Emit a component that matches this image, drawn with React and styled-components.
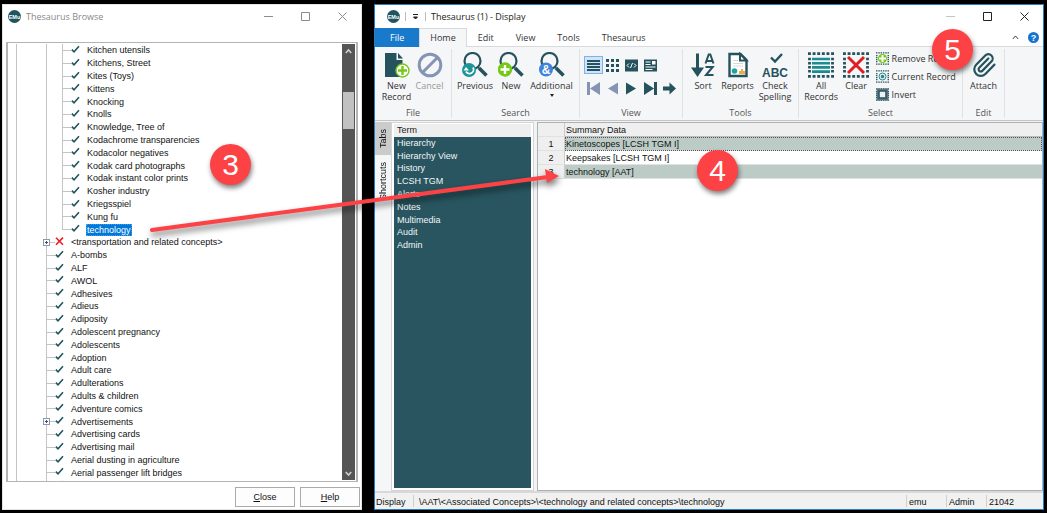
import React from "react";
import styled, { createGlobalStyle, css } from "styled-components";

const C = {
  teal: "#24525d",
  muted: "#8594b4",
  green: "#74c917",
  line: "#d9dadb",
  red: "#fd4245",
};

const Global = createGlobalStyle`
  * { box-sizing: border-box; }
  html, body { margin: 0; background: #000; }
  body { font: 9px/12px "Liberation Sans", Arial, sans-serif; color: #111; }
  button { font: inherit; color: inherit; border: 0; background: none; padding: 0; margin: 0; }
  svg { display: block; flex: none; }
`;

/* ---------- shell ---------- */
const Desktop = styled.div`
  position: relative;
  display: grid;
  grid-template-columns: 36fr 67fr;
  gap: 12px;
  height: 100vh;
  min-height: 400px;
  padding: 4px 3px 3px 2px;
  overflow: hidden;
`;
const Window = styled.section`
  display: flex;
  flex-direction: column;
  min-width: 0;
  min-height: 0;
  background: #fff;
  border: 1px solid ${(p) => (p.$active ? "#2b7cc0" : "#e4e4e4")};
`;
const TitleBar = styled.header`
  display: flex;
  align-items: center;
  flex: none;
  height: 23px;
  padding-left: ${(p) => (p.$inset ? "12px" : "5px")};
  gap: 5px;
  font-family: "Open Sans", "Noto Sans", sans-serif;
  color: ${(p) => (p.$inactive ? "#888" : "#222")};
`;
const Title = styled.h1`
  font: inherit;
  margin: 0;
  flex: 1;
`;
const Caption = styled.button`
  display: grid;
  place-items: center;
  width: 37px;
  height: 22px;
  color: ${(p) => (p.$dim ? "#c4c4c4" : p.$inactive ? "#8b8b8b" : "#222")};
  margin-left: -5px;
  &:nth-last-child(2), &:last-child { margin-left: -5px; }
`;
const Rule = styled.span`
  width: 1px;
  height: 9px;
  background: #bbb;
`;

/* ---------- browse window ---------- */
const TreePanel = styled.div`
  display: flex;
  flex: 1;
  min-height: 0;
  margin: 14px 3px 5px;
  border: 1px solid #b4b4b4;
  border-width: 1px 2px;
`;
const TreeView = styled.div`
  flex: 1;
  min-width: 0;
  padding: 1px 0 0 8px;
  overflow: hidden;
`;
const TreeList = styled.ul`
  display: grid;
  grid-auto-rows: 1fr;
  height: 448px;
  margin: 0;
  padding: 0;
  list-style: none;
`;
const TreeRow = styled.li`
  display: flex;
  align-items: stretch;
  min-height: 0;
  white-space: nowrap;
`;
const Guide = styled.span`
  flex: none;
  width: ${(p) => p.$w}px;
  border-left: 1px solid #c4c4c4;
`;
const Branch = styled.span`
  position: relative;
  flex: none;
  width: 9px;
  border-left: 1px solid ${(p) => (p.$last ? "transparent" : "#c4c4c4")};
  &::before {
    content: "";
    position: absolute;
    left: 0;
    right: 0;
    top: 6px;
    border-top: 1px solid #c4c4c4;
  }
  ${(p) =>
    p.$last &&
    css`
      &::after {
        content: "";
        position: absolute;
        left: -1px;
        top: 0;
        height: 7px;
        border-left: 1px solid #c4c4c4;
      }
    `}
`;
const Expander = styled.button`
  position: absolute;
  z-index: 1;
  left: -4px;
  top: 3px;
  width: 7px;
  height: 7px;
  border: 1px solid #8c98a8;
  background: #fff;
  &::before,
  &::after {
    content: "";
    position: absolute;
    background: #35507c;
  }
  &::before { left: 1px; top: 2px; width: 3px; height: 1px; }
  &::after { left: 2px; top: 1px; width: 1px; height: 3px; }
`;
const Mark = styled.span`
  width: 15px;
  flex: none;
`;
const Label = styled.span`
  align-self: center;
  padding: 0 1px;
  ${(p) =>
    p.$selected &&
    css`
      background: #0078d7;
      color: #fff;
      outline: 1px dotted #3b9cf0;
      outline-offset: -1px;
    `}
`;
const ScrollBar = styled.div`
  display: flex;
  flex-direction: column;
  align-items: stretch;
  width: 13px;
  margin: 1px 1px 1px 0;
  padding: 0 1px;
  background: #555;
  color: #d0d0d0;
`;
const ScrollButton = styled.button`
  display: grid;
  place-items: center;
  height: 14px;
`;
const ScrollTrack = styled.div`
  flex: 1;
  padding-top: 34px;
`;
const ScrollThumb = styled.div`
  height: 37px;
  background: #c1c1c1;
`;
const Footer = styled.footer`
  display: flex;
  justify-content: flex-end;
  gap: 5px;
  padding: 0 1px 2px;
`;
const PushButton = styled.button`
  width: 60px;
  height: 20px;
  border: 1px solid #aaa;
  background: #fdfdfd;
`;

/* ---------- ribbon ---------- */
const TabStrip = styled.nav`
  display: flex;
  flex: none;
  height: 19px;
  border-bottom: 1px solid ${C.line};
  font-family: "Open Sans", "Noto Sans", sans-serif;
`;
const RibbonTab = styled.button`
  height: 19px;
  padding: 0 10px;
  color: #333;
  border: 1px solid transparent;
  border-width: 1px 1px 0;
  ${(p) => p.$kind === "file" && css`background: #1979ca; color: #fff; padding: 0 14px;`}
  ${(p) => p.$kind === "current" && css`background: #f5f6f7; border-color: ${C.line};`}
`;
const TabTools = styled.div`
  display: flex;
  align-items: center;
  gap: 9px;
  margin-left: auto;
  padding-right: 4px;
`;
const Ribbon = styled.div`
  display: flex;
  flex: none;
  height: 74px;
  padding-top: 2px;
  background: #f5f6f7;
  border-bottom: 1px solid #c4c4c4;
  font-family: "Open Sans", "Noto Sans", sans-serif;
  line-height: 11px;
  color: #333;
`;
const Group = styled.section`
  display: flex;
  flex-direction: column;
  flex: none;
  width: ${(p) => p.$w}px;
  margin-bottom: 2px;
  border-right: 1px solid #e0e1e3;
`;
const GroupBody = styled.div`
  display: flex;
  justify-content: center;
  flex: 1;
  padding-top: 3px;
`;
const GroupName = styled.h2`
  font: inherit;
  margin: 0;
  text-align: center;
  color: #555;
`;
const BigButton = styled.button`
  display: flex;
  flex-direction: column;
  align-items: center;
  width: ${(p) => p.$w}px;
  color: ${(p) => (p.disabled ? "#999" : "#333")};
  svg { margin-bottom: 2px; }
`;
const Caret = styled.span`
  margin-top: 3px;
  border: 2px solid transparent;
  border-top: 3px solid #222;
  border-bottom: 0;
`;
const IconGrid = styled.div`
  display: grid;
  grid-template-columns: repeat(5, 19px);
  grid-template-rows: 20px 26px;
  justify-items: center;
  align-items: center;
  padding-top: 3px;
`;
const IconButton = styled.button`
  display: grid;
  place-items: center;
  width: 19px;
  height: 18px;
  ${(p) => p.$on && css`background: #cfe4f9; border: 1px solid #7fb3e8;`}
`;
const SmallList = styled.div`
  display: flex;
  flex-direction: column;
  gap: 5px;
  padding-left: 2px;
`;
const SmallButton = styled.button`
  display: flex;
  align-items: center;
  gap: 3px;
  height: 13px;
  white-space: nowrap;
`;

/* ---------- work area ---------- */
const Work = styled.div`
  display: flex;
  flex: 1;
  min-height: 0;
  padding: 1px 0 0;
  background: #f2f3f4;
`;
const SideTabs = styled.div`
  display: flex;
  flex-direction: column;
  width: 16px;
  flex: none;
  background: #f5f6f8;
`;
const SideTab = styled.button`
  writing-mode: vertical-rl;
  transform: rotate(180deg);
  width: 16px;
  padding: 7px 0;
  text-align: center;
  ${(p) => p.$on && css`background: #cbcbcb;`}
`;
const NavPanel = styled.nav`
  flex: none;
  width: 143px;
  margin-right: 3px;
  padding: 1px 2px 2px;
  background: #fff;
  border: 1px solid #d4d4d4;
`;
const NavFill = styled.div`
  height: 100%;
  background: #28555f;
`;
const NavList = styled.ul`
  display: grid;
  grid-auto-rows: 1fr;
  height: 128px;
  margin: 0;
  padding: 0;
  list-style: none;
`;
const NavItem = styled.li`
  padding-left: 3px;
  background: ${(p) => (p.$on ? "#eee" : "transparent")};
  a { color: ${(p) => (p.$on ? "#222" : "#f2f6f7")}; text-decoration: none; }
`;
const DataPanel = styled.div`
  flex: 1;
  min-width: 0;
  background: #fff;
  border: 1px solid #b0b0b0;
`;
const DataTable = styled.table`
  width: 100%;
  border-collapse: separate;
  border-spacing: 0;
  th, td {
    height: 14px;
    padding: 0 1px;
    line-height: 12px;
    font-weight: normal;
    text-align: left;
    border-bottom: 1px solid #dfe2e1;
  }
  thead th { background: #efefef; border-bottom-color: #bbb; }
  th:first-child, thead td {
    width: 27px;
    text-align: center;
    background: #efefef;
    border-right: 1px solid #ccc;
  }
`;
const Cell = styled.td`
  background: ${(p) => (p.$on ? "#bccbc6" : "#fff")};
  ${(p) => p.$focus && css`outline: 1px dotted #555; outline-offset: -1px;`}
`;
const StatusBar = styled.footer`
  display: flex;
  flex: none;
  height: 18px;
  padding: 2px 0;
  background: #f1f1f1;
  line-height: 14px;
  border-top: 2px solid #d8d8d8;
`;
const StatusPart = styled.span`
  flex: ${(p) => (p.$w ? `0 0 ${p.$w}px` : "1 1 0")};
  white-space: nowrap;
  padding-left: ${(p) => (p.$pad ?? 2)}px;
  border-left: 1px solid ${(p) => (p.$pad === 0 ? "transparent" : "#d0d0d0")};
`;

/* ---------- annotations ---------- */
const Badge = styled.span`
  position: absolute;
  left: ${(p) => p.$x}px;
  top: ${(p) => p.$y}px;
  width: 41px;
  height: 41px;
  border-radius: 50%;
  background: ${C.red};
  color: #fff;
  font-size: 30px;
  line-height: 41px;
  text-align: center;
  box-shadow: 1px 3px 5px rgba(0, 0, 0, 0.5);
`;
const ArrowLayer = styled.svg`
  position: absolute;
  inset: 0;
  width: 100%;
  height: 100%;
  pointer-events: none;
  filter: drop-shadow(1px 4px 3px rgba(0, 0, 0, 0.55));
`;

/* ---------- icons ---------- */
const Logo = () => (
  <svg width="13" height="13" viewBox="0 0 13 13" aria-hidden="true">
    <circle cx="6.5" cy="6.5" r="6.5" fill="#1f5560" />
    <text x="6.5" y="8.5" fontSize="5.500" fontWeight="bold" fill="#fff" textAnchor="middle" fontFamily="Liberation Sans">EMu</text>
  </svg>
);
const Glyph = ({ d, size = 9, w = 1, fill = "none" }) => (
  <svg width={size} height={size} viewBox="0 0 9 9" fill={fill} stroke="currentColor" strokeWidth={w} aria-hidden="true">
    <path d={d} />
  </svg>
);
const Tick = () => (
  <svg width="9" height="11" viewBox="0 0 9 11" aria-hidden="true">
    <path d="M.8 5.6 3 7.8 8 2.2" fill="none" stroke="#1f5560" strokeWidth="1.6" />
  </svg>
);
const Cross = () => (
  <svg width="9" height="11" viewBox="0 0 9 11" aria-hidden="true">
    <path d="M1 1.8 8 8.8M8 1.6 1 8.8" fill="none" stroke="#ee1c24" strokeWidth="1.6" />
  </svg>
);
const Big = ({ children, w = 26, h = 26 }) => (
  <svg width={w} height={h} viewBox={`0 0 ${w} ${h}`} fill="none" stroke={C.teal} aria-hidden="true">{children}</svg>
);
const Plus = ({ x, y, solid }) => (
  <g>
    <circle cx={x} cy={y} r="6.5" fill={solid ? C.green : "#fff"} stroke={C.green} strokeWidth="1.4" />
    <path d={`M${x - 4.5} ${y}h9M${x} ${y - 4.5}v9`} stroke={solid ? "#fff" : C.green} strokeWidth="2.4" />
  </g>
);
const Lens = ({ children }) => (
  <Big>
    <circle cx="10.500" cy="9" r="8" strokeWidth="2.200" />
    <path d="M15.500 14.500 17 16" strokeWidth="2" />
    <path d="M17 16 24.500 23.500" strokeWidth="3.600" />
    {children}
  </Big>
);
const SelBox = ({ children, s = 26 }) => (
  <svg width={s} height={s} viewBox="0 0 26 26" fill="none" stroke={C.teal} aria-hidden="true">
    <path d="M0 1.7h26M0 24.3h26" strokeWidth="2.800" strokeDasharray="2.900 1.720" />
    <path d="M1.500 5.800v15M24.500 5.800v15" strokeWidth="2.800" strokeDasharray="2.500 1.600" />
    {children}
  </svg>
);
const Small = ({ children }) => (
  <svg width="13" height="13" viewBox="0 0 13 13" aria-hidden="true" fill={C.teal}>{children}</svg>
);

const NewRecordIcon = () => (
  <Big>
    <path d="M1 1h11.500v7H18.500v17H1z" fill={C.teal} stroke="none" />
    <path d="M14 1l5 5.500h-5z" fill={C.teal} stroke="none" />
    <Plus x={18.5} y={18.5} />
  </Big>
);
const CancelIcon = () => (
  <Big>
    <circle cx="13" cy="13" r="10.8" stroke={C.muted} strokeWidth="3" />
    <path d="M20.5 5.5 5.5 20.5" stroke={C.muted} strokeWidth="3" />
  </Big>
);
const SortIcon = () => (
  <Big w={24}>
    <path d="M6.5 1.500v16" strokeWidth="3" />
    <path d="M0 15.500h13L6.500 25z" fill={C.teal} stroke="none" />
    <path d="M14.500 11.500 17.700 2.500h1.600L22.500 11.500M15.800 9h5.400" strokeWidth="2" />
    <path d="M14.500 15h7.200L15 23h7.500" strokeWidth="2" />
  </Big>
);
const ReportIcon = () => (
  <Big w={22}>
    <path d="M2.500 2h11l6 6v16h-17z" fill="#fff" strokeWidth="2.400" />
    <path d="M13 2v6.500h6.500z" fill="#fff" strokeWidth="2" />
    <path d="M6 8.500h5M6 11.500h10M6 14h10" stroke="#d5d9db" />
    <circle cx="7.500" cy="19" r="2.800" fill="#20a39a" stroke="none" />
    <path d="M12 22v-3h2v-2h2v2h2v3z" fill="#efab45" stroke="none" />
  </Big>
);
const SpellIcon = () => (
  <Big>
    <path d="M9 5.500 13 9.500 20 2" strokeWidth="2.400" />
    <text x="13" y="24.500" fontSize="12" fontWeight="bold" fill={C.teal} stroke="none" textAnchor="middle" fontFamily="Liberation Sans">ABC</text>
  </Big>
);
const ClipIcon = () => (
  <svg width="26" height="26" viewBox="0 0 24 24" fill="none" stroke={C.teal} strokeWidth="2" strokeLinecap="round" aria-hidden="true">
    <path d="m16 6-8.414 8.586a2 2 0 0 0 2.829 2.829l8.414-8.586a4 4 0 1 0-5.657-5.657l-8.379 8.551a6 6 0 1 0 8.485 8.485l8.379-8.551" />
  </svg>
);

const children = [
  "Kitchen utensils", "Kitchens, Street", "Kites (Toys)", "Kittens", "Knocking", "Knolls",
  "Knowledge, Tree of", "Kodachrome transparencies", "Kodacolor negatives", "Kodak card photographs",
  "Kodak instant color prints", "Kosher industry", "Kriegsspiel", "Kung fu", "technology",
];
const siblings = [
  "<transportation and related concepts>", "A-bombs", "ALF", "AWOL", "Adhesives", "Adieus", "Adiposity",
  "Adolescent pregnancy", "Adolescents", "Adoption", "Adult care", "Adulterations", "Adults & children",
  "Adventure comics", "Advertisements", "Advertising cards", "Advertising mail",
  "Aerial dusting in agriculture", "Aerial passenger lift bridges", "",
];

function BrowseWindow() {
  return (
    <Window>
      <TitleBar $inactive>
        <Logo />
        <Title>Thesaurus Browse</Title>
        <Caption $inactive aria-label="Minimize"><Glyph d="M0 4.500h9" /></Caption>
        <Caption $inactive aria-label="Maximize"><Glyph d="M.5.5h8v8h-8z" /></Caption>
        <Caption $inactive aria-label="Close window"><Glyph d="M.5.5l8 8M8.500.5l-8 8" /></Caption>
      </TitleBar>
      <TreePanel>
        <TreeView>
          <TreeList>
            {children.map((t, i) => (
              <TreeRow key={t}>
                <Guide $w={30} />
                <Guide $w={16} />
                <Branch $last={i === children.length - 1} />
                <Mark><Tick /></Mark>
                <Label $selected={t === "technology"}>{t}</Label>
              </TreeRow>
            ))}
            {siblings.map((t, i) => (
              <TreeRow key={t}>
                <Guide $w={30} />
                <Branch>
                  {(i === 0 || t === "Advertisements") && <Expander aria-label={`Expand ${t}`} />}
                </Branch>
                <Mark>{i === 0 ? <Cross /> : <Tick />}</Mark>
                <Label>{t}</Label>
              </TreeRow>
            ))}
          </TreeList>
        </TreeView>
        <ScrollBar>
          <ScrollButton aria-label="Scroll up"><Glyph size={7} w={2} d="M1 6.500l3.500-4 3.500 4" /></ScrollButton>
          <ScrollTrack><ScrollThumb /></ScrollTrack>
          <ScrollButton aria-label="Scroll down"><Glyph size={7} w={2} d="M1 2.500l3.500 4 3.500-4" /></ScrollButton>
        </ScrollBar>
      </TreePanel>
      <Footer>
        <PushButton><u>C</u>lose</PushButton>
        <PushButton><u>H</u>elp</PushButton>
      </Footer>
    </Window>
  );
}

const navItems = ["Term", "Hierarchy", "Hierarchy View", "History", "LCSH TGM", "Alerts", "Notes", "Multimedia", "Audit", "Admin"];
const rows = ["Kinetoscopes [LCSH TGM I]", "Keepsakes [LCSH TGM I]", "technology [AAT]"];

function RibbonBar() {
  return (
    <Ribbon>
      <Group $w={77}>
        <GroupBody>
          <BigButton $w={33}><NewRecordIcon />New<br />Record</BigButton>
          <BigButton $w={33} disabled><CancelIcon />Cancel</BigButton>
        </GroupBody>
        <GroupName>File</GroupName>
      </Group>
      <Group $w={128}>
        <GroupBody>
          <BigButton $w={40}>
            <Lens>
              <circle cx="7" cy="18" r="7" fill="#1d9496" stroke="none" />
              <path d="M4 19.500a4 4 0 0 0 7-4" stroke="#fff" strokeWidth="1.800" />
              <path d="M1.500 18.500l2.500-3.500 3 3.500z" fill="#fff" stroke="none" />
            </Lens>
            Previous
          </BigButton>
          <BigButton $w={32}><Lens><Plus x={7} y={17.5} solid /></Lens>New</BigButton>
          <BigButton $w={49}>
            <Lens>
              <circle cx="7" cy="17.500" r="7" fill="#3f82dc" stroke="none" />
              <text x="7" y="22" fontSize="12" fontWeight="bold" fill="#fff" stroke="none" textAnchor="middle" fontFamily="Liberation Sans">&amp;</text>
            </Lens>
            Additional
            <Caret />
          </BigButton>
        </GroupBody>
        <GroupName>Search</GroupName>
      </Group>
      <Group $w={103}>
        <GroupBody>
          <IconGrid>
            <IconButton $on aria-label="List view"><Small><path d="M0 1h13v2H0zM0 4h13v2H0zM0 7h13v2H0zM0 10h13v2H0z" /></Small></IconButton>
            <IconButton aria-label="Contact sheet"><Small><path d="M0 0h3v3H0zM5 0h3v3H5zM10 0h3v3h-3zM0 5h3v3H0zM5 5h3v3H5zM10 5h3v3h-3zM0 10h3v3H0zM5 10h3v3H5zM10 10h3v3h-3z" /></Small></IconButton>
            <IconButton aria-label="Source view">
              <Small><path d="M0 .5h13v12H0z" /><path d="M4 4.500 2 6.500l2 2M9 4.500l2 2-2 2M7.500 4l-2 5" fill="none" stroke="#fff" /></Small>
            </IconButton>
            <IconButton aria-label="Page view">
              <Small><path d="M0 .5h13v12H0z" /><path d="M1.500 3h5M1.500 5.500h5M1.500 8h10M1.500 10.500h7" stroke="#fff" /><path d="M8 2h3.500v3.500H8z" fill="#fff" /></Small>
            </IconButton>
            <span />
            <IconButton aria-label="First"><Small><path fill={C.muted} d="M0 0h3v13H0zM13 0v13L3 6.500z" /></Small></IconButton>
            <IconButton aria-label="Back"><Small><path fill={C.muted} d="M12 0.500v12L2 6.500z" /></Small></IconButton>
            <IconButton aria-label="Forward"><Small><path d="M1 0.500v12L11 6.500z" /></Small></IconButton>
            <IconButton aria-label="Last"><Small><path d="M10 0h3v13h-3zM0 0v13L10 6.500z" /></Small></IconButton>
            <IconButton aria-label="Go to"><Small><path d="M0 4.500h6.500V.5L13 6.500l-6.500 6v-4H0z" /></Small></IconButton>
          </IconGrid>
        </GroupBody>
        <GroupName>View</GroupName>
      </Group>
      <Group $w={116}>
        <GroupBody>
          <BigButton $w={30}><SortIcon />Sort</BigButton>
          <BigButton $w={39}><ReportIcon />Reports</BigButton>
          <BigButton $w={36}><SpellIcon />Check<br />Spelling</BigButton>
        </GroupBody>
        <GroupName>Tools</GroupName>
      </Group>
      <Group $w={164}>
        <GroupBody>
          <BigButton $w={35}>
            <SelBox><path d="M4 7h18M4 11.200h18M4 15.400h18M4 19.600h18" stroke="#1d8c8e" strokeWidth="2.600" /></SelBox>
            All<br />Records
          </BigButton>
          <BigButton $w={35}>
            <SelBox><path d="M5 5l16 16M21 5 5 21" stroke="#e01b22" strokeWidth="3" /></SelBox>
            Clear
          </BigButton>
          <SmallList>
            <SmallButton><SelBox s={13}><circle cx="13" cy="13" r="9" fill={C.green} stroke="none" /><path d="M13 6v14M6 13h14" stroke="#fff" strokeWidth="4" /></SelBox>Remove Record</SmallButton>
            <SmallButton><SelBox s={13}><circle cx="13" cy="13" r="7" stroke="#1d8c8e" strokeWidth="2" /><circle cx="13" cy="13" r="3" fill="#1d8c8e" /></SelBox>Current Record</SmallButton>
            <SmallButton><SelBox s={13}><path d="M2 2h22v22H2z" fill="#718488" /><path d="M6 6h14v14H6z" fill="#eef1f2" strokeWidth="3" /></SelBox>Invert</SmallButton>
          </SmallList>
        </GroupBody>
        <GroupName>Select</GroupName>
      </Group>
      <Group $w={42}>
        <GroupBody><BigButton $w={38}><ClipIcon />Attach</BigButton></GroupBody>
        <GroupName>Edit</GroupName>
      </Group>
    </Ribbon>
  );
}

function DisplayWindow() {
  return (
    <Window $active>
      <TitleBar $inset>
        <Logo />
        <Rule />
        <Glyph d="M2 2.500h5M2.500 5h4l-2 2z" fill="currentColor" />
        <Rule />
        <Title>Thesaurus (1) - Display</Title>
        <Caption $dim aria-label="Minimize"><Glyph d="M0 4.500h9" /></Caption>
        <Caption aria-label="Maximize"><Glyph d="M.5.5h8v8h-8z" /></Caption>
        <Caption aria-label="Close window"><Glyph d="M.5.5l8 8M8.500.5l-8 8" /></Caption>
      </TitleBar>
      <TabStrip>
        <RibbonTab $kind="file">File</RibbonTab>
        <RibbonTab $kind="current">Home</RibbonTab>
        {["Edit", "View", "Tools", "Thesaurus"].map((t) => <RibbonTab key={t}>{t}</RibbonTab>)}
        <TabTools>
          <Glyph size={7} d="M1 6.500l3.500-4 3.500 4" />
          <svg width="11" height="11" viewBox="0 0 11 11" role="img" aria-label="Help">
            <circle cx="5.500" cy="5.500" r="5.500" fill="#1674cf" />
            <text x="5.500" y="8.700" fontSize="9" fontWeight="bold" fill="#fff" textAnchor="middle" fontFamily="Liberation Sans">?</text>
          </svg>
        </TabTools>
      </TabStrip>
      <RibbonBar />
      <Work>
        <SideTabs>
          <SideTab $on>Tabs</SideTab>
          <SideTab>Shortcuts</SideTab>
        </SideTabs>
        <NavPanel>
          <NavFill>
            <NavList>
              {navItems.map((t, i) => <NavItem key={t} $on={i === 0}><a href="#tab">{t}</a></NavItem>)}
            </NavList>
          </NavFill>
        </NavPanel>
        <DataPanel>
          <DataTable>
            <thead><tr><td /><th scope="col">Summary Data</th></tr></thead>
            <tbody>
              {rows.map((r, i) => (
                <tr key={r}><th scope="row">{i + 1}</th><Cell $on={i !== 1} $focus={i === 0}>{r}</Cell></tr>
              ))}
            </tbody>
          </DataTable>
        </DataPanel>
      </Work>
      <StatusBar>
        <StatusPart $w={38} $pad={0}>Display</StatusPart>
        <StatusPart $pad={5}>{"\\AAT\\<Associated Concepts>\\<technology and related concepts>\\technology"}</StatusPart>
        <StatusPart $w={40}>emu</StatusPart>
        <StatusPart $w={40}>Admin</StatusPart>
        <StatusPart $w={57}>21042</StatusPart>
      </StatusBar>
    </Window>
  );
}

export default function App() {
  return (
    <>
      <Global />
      <Desktop>
        <BrowseWindow />
        <DisplayWindow />
        <ArrowLayer aria-hidden="true">
          <path d="M152 230 548 177" stroke={C.red} strokeWidth="4" strokeLinecap="round" />
          <path d="M545 169 559 176 547 183z" fill={C.red} />
        </ArrowLayer>
        <Badge $x={210} $y={144}>3</Badge>
        <Badge $x={697} $y={150}>4</Badge>
        <Badge $x={932} $y={29}>5</Badge>
      </Desktop>
    </>
  );
}
